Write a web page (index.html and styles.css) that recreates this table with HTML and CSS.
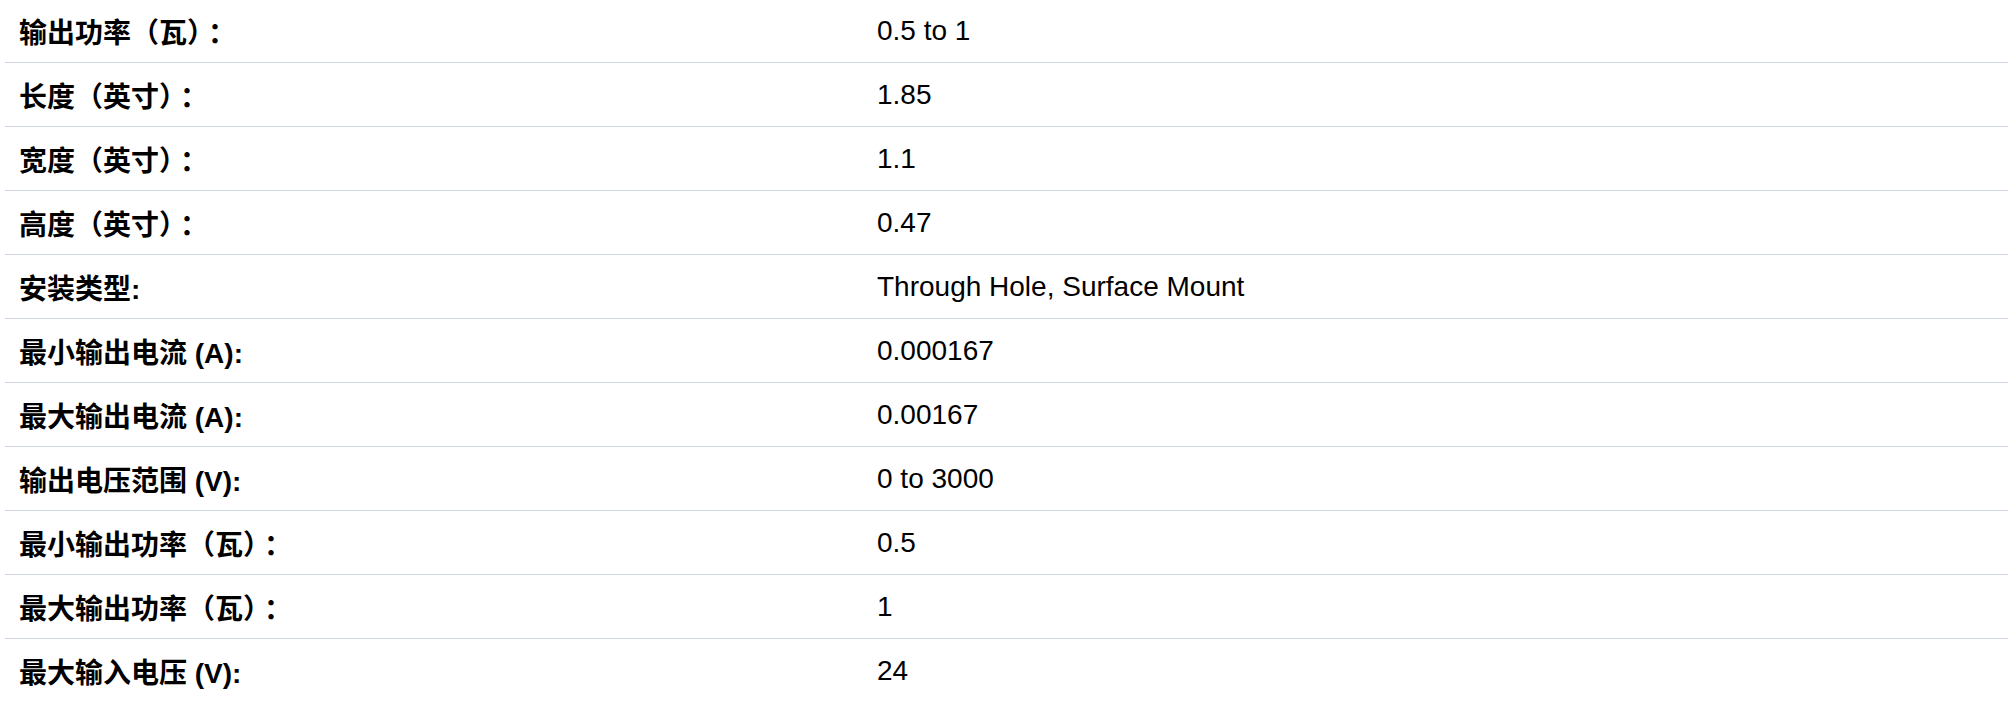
FILE: index.html
```html
<!DOCTYPE html>
<html lang="zh-CN">
<head>
<meta charset="utf-8">
<title>Specs</title>
<link rel="stylesheet" href="styles.css">
</head>
<body>
<div class="specs">
  <div class="row"><div class="label">输出功率（瓦）<span class="colon">：</span></div><div class="value">0.5 to 1</div></div>
  <div class="row"><div class="label">长度（英寸）<span class="colon">：</span></div><div class="value">1.85</div></div>
  <div class="row"><div class="label">宽度（英寸）<span class="colon">：</span></div><div class="value">1.1</div></div>
  <div class="row"><div class="label">高度（英寸）<span class="colon">：</span></div><div class="value">0.47</div></div>
  <div class="row"><div class="label">安装类型:</div><div class="value">Through Hole, Surface Mount</div></div>
  <div class="row"><div class="label">最小输出电流 (A):</div><div class="value">0.000167</div></div>
  <div class="row"><div class="label">最大输出电流 (A):</div><div class="value">0.00167</div></div>
  <div class="row"><div class="label">输出电压范围 (V):</div><div class="value">0 to 3000</div></div>
  <div class="row"><div class="label">最小输出功率（瓦）<span class="colon">：</span></div><div class="value">0.5</div></div>
  <div class="row"><div class="label">最大输出功率（瓦）<span class="colon">：</span></div><div class="value">1</div></div>
  <div class="row last"><div class="label">最大输入电压 (V):</div><div class="value">24</div></div>
</div>
</body>
</html>
```
FILE: styles.css
```css
html, body {
  margin: 0;
  padding: 0;
  background: #ffffff;
  overflow: hidden;
}
body {
  font-family: "Liberation Sans", Arial, "Noto Sans CJK SC", sans-serif;
  font-size: 28px;
  color: #000000;
}
.specs {
  margin: -1px 0 0 5px;
  display: flex;
  flex-direction: column;
}
.row {
  display: grid;
  grid-template-columns: 857px 1fr;
  height: 63px;
  align-items: center;
  border-bottom: 1px solid #cdd5e5;
}
.row.last {
  border-bottom: none;
}
.label {
  padding-left: 14px;
  font-weight: bold;
}
.colon {
  padding-left: 7px;
}
.value {
  padding-left: 15px;
}
```
